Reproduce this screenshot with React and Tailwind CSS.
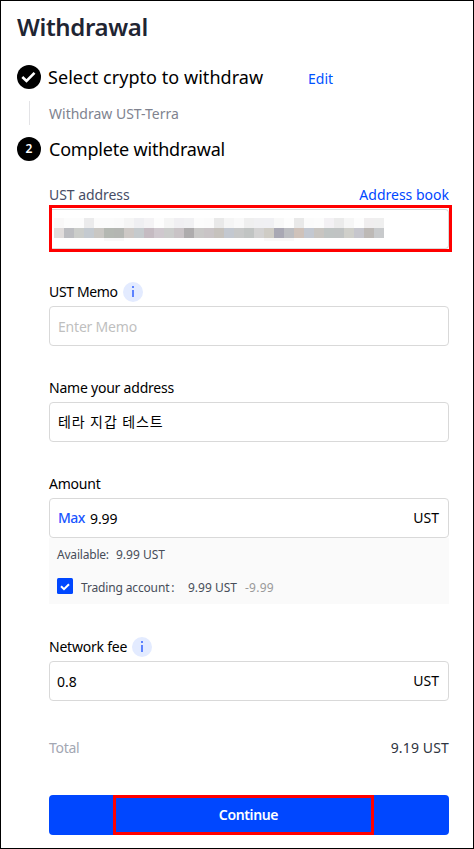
import React from "react";
import clsx from "clsx";

// one entry per blurred tile of the hidden address, top row and bottom row
const tilesTop = [
    "#f9f8f8", "#fcfcfc", "#fcfcfc", "#ebebec", "#fbfbfb", "#fbfbfb", "#fafafa", "#f5f5f5", "#efeff2", "#f4f3f5", "#fdfdfd",
    "#f5f5f5", "#f0eff2", "#f1f1f3", "#fcfcfc", "#fbfbfb", "#e9e9e9", "#f5f5f5", "#f9f9f9", "#efefef", "#f0f0f2", "#f0f0f3",
    "#f8f8f8", "#fdfdfd", "#e9e9e9", "#fbfbfb", "#fcfcfc", "#f3f1f4", "#ebebeb", "#f6f6f6", "#fdfdfd", "#f0eeef", "#efefef",
];
const tilesBottom = [
    "#e0dcdb", "#bcbdc1", "#cbcdca", "#c4cad0", "#c9c7c3", "#b4b8b2", "#b4b6b2", "#cdc8c5", "#c5cacd", "#c5bbc2", "#cfc8ce",
    "#cbcccb", "#c9c3c6", "#aeacad", "#c9c8c7", "#c9c4c6", "#c6c2bd", "#c3c8d0", "#c7c8c8", "#c1c4c3", "#d3d2d2", "#cfccc5",
    "#a9a8b4", "#bcbdc1", "#cfc2ba", "#c3c8d1", "#c8c5c1", "#bfc4c3", "#c0c3c3", "#cfcfca", "#c6c6cd", "#bdb9b6", "#c8cacc",
];

const TileRow = ({ tiles }) => (
    <div className="flex">
        {tiles.map((color, i) => (
            <span key={i} className="size-[10px]" style={{ backgroundColor: color }} />
        ))}
    </div>
);

const InfoIcon = () => (
    <svg className="ml-[5px] size-5" viewBox="0 0 20 20" fill="none">
        <circle cx="10" cy="10" r="10" fill="#e3ebff" />
        <path d="M9 4h2v2H9zM9 8h2v7H9z" fill="#5c82ff" />
    </svg>
);

const Label = ({ children, info, className }) => (
    <div className={clsx("flex h-5 items-center", className)}>
        <span className="tracking-[-0.22px]">{children}</span>
        {info && <InfoIcon />}
    </div>
);

const Box = ({ children, className }) => (
    <div
        className={clsx(
            "flex h-10 items-center rounded-[4px] border border-[#d9d9d9] pr-[9px] pl-2",
            className,
        )}
    >
        {children}
    </div>
);

const App = () => {
    return (
        <div className="flex h-[849px] w-[474px] flex-col border border-black bg-white pr-6 pl-4 font-['Noto_Sans','Noto_Sans_CJK_KR',sans-serif] text-[14px] leading-5 whitespace-nowrap text-black">
            <h1 className="mt-[10px] h-8 text-[24px] leading-8 font-semibold tracking-[-0.35px] text-[#1f2533]">
                Withdrawal
            </h1>

            {/* steps */}
            <div className="mt-[22px] flex h-6 items-center">
                <svg className="size-6" viewBox="0 0 24 24" fill="none">
                    <circle cx="12" cy="12" r="12" fill="#000" />
                    <path d="M5.3 12l4.2 4 8-8.2" stroke="#fff" strokeWidth="2.6" />
                </svg>
                <span className="ml-[7px] w-[260px] text-[18px] tracking-[0.05px]">
                    Select crypto to withdraw
                </span>
                <span className="pt-1 text-[#0052ff]">Edit</span>
            </div>
            <div className="mt-3 flex h-6 items-center">
                <span className="ml-3 h-6 w-px bg-[#e3e3e6]" />
                <span className="ml-[19px] pt-0.5 text-[#80838f]">Withdraw UST-Terra</span>
            </div>
            <div className="mt-3 flex h-6 items-center">
                <span className="flex size-6 items-center justify-center rounded-full bg-black text-[12px] font-semibold text-white">
                    2
                </span>
                <span className="ml-2 text-[18px] tracking-[-0.2px]">Complete withdrawal</span>
            </div>

            {/* form */}
            <div className="ml-8 flex w-[400px] flex-col">
                <div className="mt-6 flex h-5 justify-between">
                    <span className="tracking-[-0.05px] text-[#474d66]">UST address</span>
                    <span className="text-[#0047ff]">Address book</span>
                </div>
                <div className="h-[47px] w-[403px] border-3 border-[#ff0000]">
                    <div className="mt-px flex h-10 w-[397px] flex-col rounded-r-[4px] border-y border-r border-[#d9d9d9] pt-2 pl-0.5">
                        <TileRow tiles={tilesTop} />
                        <TileRow tiles={tilesBottom} />
                        <div className="flex h-[3px]">
                            <span className="ml-[50px] w-5 bg-[#f9f9f9]" />
                            <span className="ml-[140px] w-[30px] bg-[#faf9f9]" />
                        </div>
                    </div>
                </div>

                <div className="mt-[30px] flex h-5 items-center">
                    <span className="tracking-[-0.35px]">UST Memo</span>
                    <InfoIcon />
                </div>
                <Box className="mt-1 pt-0.5 text-[#bfbfbf]">
                    <span className="tracking-[-0.2px]">Enter Memo</span>
                </Box>

                <Label className="mt-8">Name your address</Label>
                <Box className="mt-1">
                    <span className="tracking-[0.9px]">테라 지갑 테스트</span>
                </Box>

                <Label className="mt-8">Amount</Label>
                <Box className="mt-1">
                    <span className="font-medium tracking-[-0.5px] text-[#1a56ff]">Max</span>
                    <span className="ml-[5px] pt-0.5 tracking-[-0.1px]">9.99</span>
                    <span className="ml-auto">UST</span>
                </Box>
                <div className="h-[66px] bg-[#fafafa] pl-2 text-[12px] leading-4 text-[#474d59]">
                    <div className="flex h-8 items-center pt-0.5">
                        <span className="w-[59px] tracking-[-0.2px]">Available:</span>
                        <span>9.99 UST</span>
                    </div>
                    <div className="flex h-8 items-center">
                        <svg className="size-4" viewBox="0 0 16 16" fill="none">
                            <rect width="16" height="16" rx="1.5" fill="#0047ff" />
                            <path d="M4 8.2l3 3 5-5" stroke="#fff" strokeWidth="2" />
                        </svg>
                        <span className="ml-2 w-[107px] pt-[3px] tracking-[-0.15px]">
                            Trading account<span className="ml-0.5">:</span>
                        </span>
                        <span className="w-[57px] pt-[3px]">9.99 UST</span>
                        <span className="pt-[3px] tracking-[0.25px] text-[#999999]">-9.99</span>
                    </div>
                </div>

                <Label info className="mt-[33px]">Network fee</Label>
                <Box className="mt-1">
                    <span className="-ml-px pt-0.5">0.8</span>
                    <span className="ml-auto">UST</span>
                </Box>

                <div className="mt-[37px] flex h-5 justify-between">
                    <span className="tracking-[-0.3px] text-[#a3a7b3]">Total</span>
                    <span className="tracking-[0.15px] text-[#2e3440]">9.19 UST</span>
                </div>

                <div className="mt-[37px] flex h-10 justify-center rounded-[4px] bg-[#0047ff]">
                    <button className="mr-[11px] flex h-10 w-[261px] items-center justify-center border-3 border-[#ff0000] pl-[10px] font-semibold tracking-[-0.35px] text-white">
                        Continue
                    </button>
                </div>
            </div>
        </div>
    );
};

export default App;
